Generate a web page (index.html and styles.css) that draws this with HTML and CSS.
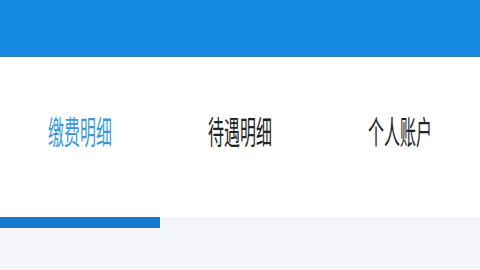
FILE: index.html
```html
<!DOCTYPE html>
<html>
<head>
<meta charset="utf-8">
<link rel="stylesheet" href="styles.css">
</head>
<body>
<div class="page">
  <div class="header"></div>
  <div class="tabs">
    <div class="tab active"><span class="label">缴费明细</span></div>
    <div class="tab"><span class="label">待遇明细</span></div>
    <div class="tab"><span class="label">个人账户</span></div>
  </div>
  <div class="track">
    <div class="indicator"></div>
  </div>
  <div class="rest"></div>
</div>
</body>
</html>
```

FILE: styles.css
```css
html, body {
  margin: 0;
  padding: 0;
}
body {
  width: 480px;
  height: 270px;
  overflow: hidden;
  background: #f4f5f9;
  font-family: "Noto Sans CJK SC", "Noto Sans", sans-serif;
}
.page {
  display: flex;
  flex-direction: column;
  width: 480px;
  height: 270px;
}
.header {
  height: 55px;
  background: #1589e2;
  border-bottom: 2px solid #3a7fb8;
}
.tabs {
  height: 160px;
  background: #ffffff;
  display: grid;
  grid-template-columns: repeat(3, 1fr);
}
.tab {
  display: flex;
  align-items: center;
  justify-content: center;
  padding-bottom: 14px;
}
.label {
  display: inline-block;
  font-size: 16px;
  line-height: 16px;
  color: #222222;
  transform: scaleY(2);
  letter-spacing: 0;
}
.tab.active .label {
  color: #3a9ad6;
}
.track {
  height: 11px;
  background: #f4f5f9;
  display: flex;
}
.indicator {
  width: 160px;
  height: 11px;
  background: #1b78cf;
}
.rest {
  flex: 1;
  background: #f4f5f9;
}
```
